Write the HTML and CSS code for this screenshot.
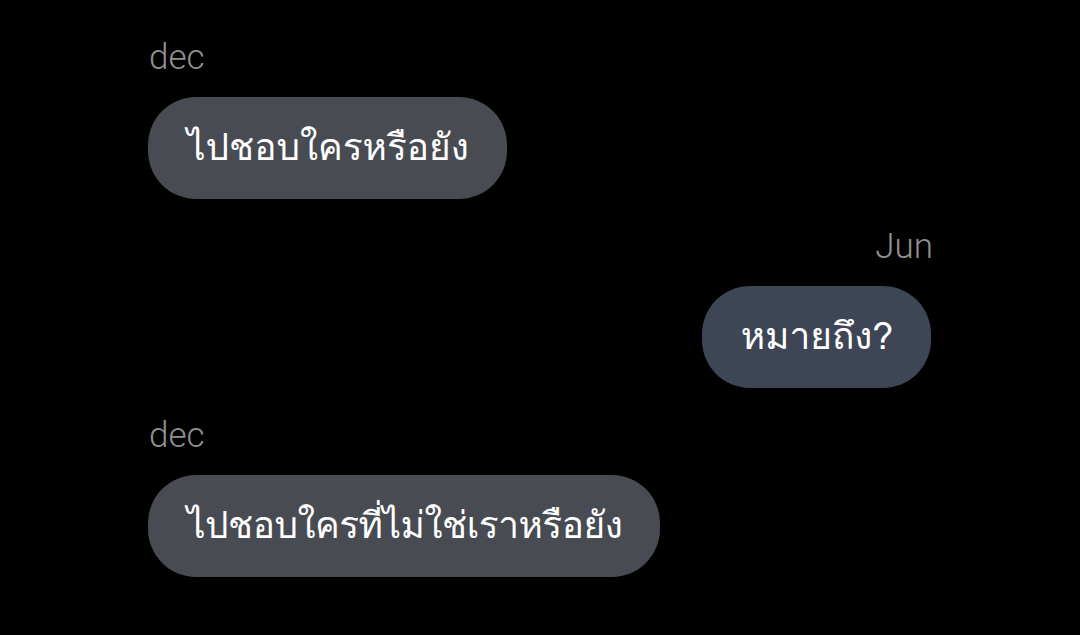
FILE: index.html
```html
<!DOCTYPE html>
<html lang="th">
<head>
<meta charset="utf-8">
<link rel="stylesheet" href="styles.css">
</head>
<body>
<main class="chat">
  <div class="msg msg-left">
    <div class="name">dec</div>
    <div class="bubble bubble-them">ไปชอบใครหรือยัง</div>
  </div>
  <div class="msg msg-right">
    <div class="name">Jun</div>
    <div class="bubble bubble-me">หมายถึง?</div>
  </div>
  <div class="msg msg-left">
    <div class="name">dec</div>
    <div class="bubble bubble-them bubble-long">ไปชอบใครที่ไม่ใช่เราหรือยัง</div>
  </div>
</main>
</body>
</html>
```
FILE: styles.css
```css
html, body {
  margin: 0;
  padding: 0;
  background: #000;
}
body {
  width: 1080px;
  height: 635px;
  overflow: hidden;
  font-family: "Roboto", "Liberation Sans", "Noto Sans Thai", sans-serif;
}
.chat {
  display: flex;
  flex-direction: column;
  gap: 30px;
  padding: 40px 149px 0 148px;
}
.msg {
  display: flex;
  flex-direction: column;
  gap: 21px;
}
.msg-left { align-items: flex-start; }
.msg-right { align-items: flex-end; }
.name {
  font-size: 35px;
  font-weight: 300;
  line-height: 36px;
  color: #909090;
  padding: 0 1px;
}
.msg-right .name {
  padding: 0;
  margin-right: -2px;
}
.bubble {
  height: 102px;
  box-sizing: border-box;
  display: flex;
  align-items: center;
  padding: 0 38px 4px 39px;
  border-radius: 48px;
  font-family: "Loma", "Noto Sans Thai", sans-serif;
  font-size: 37px;
  font-weight: 300;
  color: #fff;
}
.bubble-long { letter-spacing: -0.5px; }
.bubble-them { background: #484b52; }
.bubble-me { background: #3e4656; }
```
